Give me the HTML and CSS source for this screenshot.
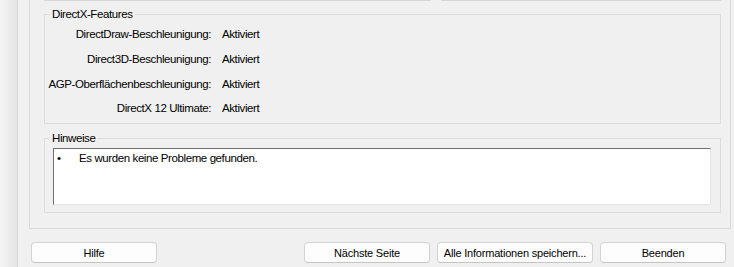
FILE: index.html
```html
<!DOCTYPE html>
<html>
<head>
    <meta charset="UTF-8">
    <title>DirectX-Diagnoseprogramm</title>
    <link rel="stylesheet" href="styles.css">
</head>
<body>
    <div class="window">
        <div class="edge"></div>
        <div class="main">
            <div class="tabpage">
                <div class="prev-row">
                    <div class="prev prev-left"></div>
                    <div class="prev prev-right"></div>
                </div>
                <fieldset class="group features">
                    <legend>DirectX-Features</legend>
                    <div class="feature-grid">
                        <span class="label">DirectDraw-Beschleunigung:</span>
                        <span class="value">Aktiviert</span>
                        <span class="label">Direct3D-Beschleunigung:</span>
                        <span class="value">Aktiviert</span>
                        <span class="label">AGP-Oberflächenbeschleunigung:</span>
                        <span class="value">Aktiviert</span>
                        <span class="label">DirectX 12 Ultimate:</span>
                        <span class="value">Aktiviert</span>
                    </div>
                </fieldset>
                <fieldset class="group notes">
                    <legend>Hinweise</legend>
                    <div class="notes-box">
                        <div class="note"><span class="bullet">•</span>Es wurden keine Probleme gefunden.</div>
                    </div>
                </fieldset>
            </div>
            <div class="buttons">
                <button class="btn btn-help">Hilfe</button>
                <button class="btn btn-next">Nächste Seite</button>
                <button class="btn btn-save">Alle Informationen speichern...</button>
                <button class="btn btn-exit">Beenden</button>
            </div>
        </div>
    </div>
</body>
</html>
```

FILE: styles.css
```css
body { margin: 0; background: #f0f0f0; font-family: "Liberation Sans", Arial, sans-serif; font-size: 11.5px; letter-spacing: -0.4px; color: #000; }
.window { display: flex; height: 267px; overflow: hidden; }
.edge { flex: none; width: 17px; border-right: 1px solid #d9d9d9; background: linear-gradient(to right, #f4f4f4, #e4e4e4); }
.main { flex: 1; padding: 0 3px 0 11px; }

.tabpage { box-sizing: border-box; width: 702px; height: 229px; border: 1px solid #d9d9d9; border-top: none; padding: 0 9px 0 14px; }
.prev-row { display: flex; gap: 10px; }
.prev { height: 1px; background: #d7d7d7; }
.prev-left { width: 387px; }
.prev-right { width: 280px; }

.group { box-sizing: border-box; margin: 0; padding: 0; border: 1px solid #dcdcdc; }
.group legend { margin-left: 5px; padding: 0 2px; line-height: 16px; }
.features { margin-top: 5px; height: 118px; }
.notes { margin-top: 6px; height: 83px; }

.feature-grid { display: grid; grid-template-columns: 166px auto; grid-auto-rows: 24.67px; column-gap: 11px; align-items: center; }
.label { text-align: right; white-space: nowrap; }

.notes-box { box-sizing: border-box; width: 658px; height: 57px; margin: 2px 0 0 8px; background: #fff; border: 1px solid #e3e3e3; border-top-color: #6e6e6e; border-left-color: #6e6e6e; padding: 1px 3px; }
.note { display: flex; line-height: 16px; }
.bullet { width: 22px; }

.buttons { display: flex; gap: 7px; margin-top: 13px; padding-left: 2px; }
.btn { box-sizing: border-box; flex: none; height: 21px; width: 126px; padding: 0; background: #fdfdfd; border: 1px solid #d3d3d3; border-bottom-color: #c4c4c4; border-radius: 4px; font-family: inherit; font-size: 11px; letter-spacing: -0.2px; color: #000; }
.btn-help { margin-right: 140px; }
.btn-save { width: 156px; }
```
